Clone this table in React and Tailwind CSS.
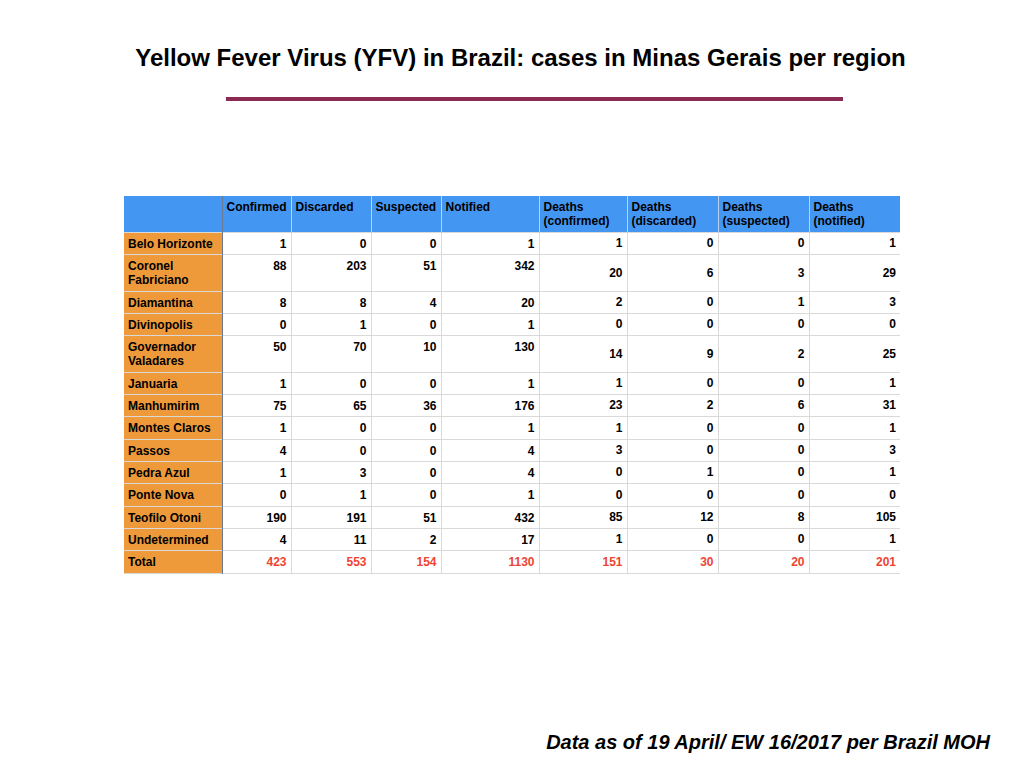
import React from "react";

const cols = [
  { label: ["Confirmed"], w: "w-[69px]", top: true },
  { label: ["Discarded"], w: "w-[80px]", top: true },
  { label: ["Suspected"], w: "w-[70px]", top: true },
  { label: ["Notified"], w: "w-[98px]", top: true },
  { label: ["Deaths", "(confirmed)"], w: "w-[88px]", top: false },
  { label: ["Deaths", "(discarded)"], w: "w-[91px]", top: false },
  { label: ["Deaths", "(suspected)"], w: "w-[91px]", top: false },
  { label: ["Deaths", "(notified)"], w: "w-[91px]", top: false },
];

const rows = [
  { name: ["Belo Horizonte"], h: "h-[22px]", v: [1, 0, 0, 1, 1, 0, 0, 1] },
  { name: ["Coronel", "Fabriciano"], h: "h-[37px]", v: [88, 203, 51, 342, 20, 6, 3, 29] },
  { name: ["Diamantina"], h: "h-[22px]", v: [8, 8, 4, 20, 2, 0, 1, 3] },
  { name: ["Divinopolis"], h: "h-[22px]", v: [0, 1, 0, 1, 0, 0, 0, 0] },
  { name: ["Governador", "Valadares"], h: "h-[37px]", v: [50, 70, 10, 130, 14, 9, 2, 25] },
  { name: ["Januaria"], h: "h-[22px]", v: [1, 0, 0, 1, 1, 0, 0, 1] },
  { name: ["Manhumirim"], h: "h-[22px]", v: [75, 65, 36, 176, 23, 2, 6, 31] },
  { name: ["Montes Claros"], h: "h-[23px]", v: [1, 0, 0, 1, 1, 0, 0, 1] },
  { name: ["Passos"], h: "h-[22px]", v: [4, 0, 0, 4, 3, 0, 0, 3] },
  { name: ["Pedra Azul"], h: "h-[22px]", v: [1, 3, 0, 4, 0, 1, 0, 1] },
  { name: ["Ponte Nova"], h: "h-[23px]", v: [0, 1, 0, 1, 0, 0, 0, 0] },
  { name: ["Teofilo Otoni"], h: "h-[22px]", v: [190, 191, 51, 432, 85, 12, 8, 105] },
  { name: ["Undetermined"], h: "h-[22px]", v: [4, 11, 2, 17, 1, 0, 0, 1] },
];

const total = [423, 553, 154, 1130, 151, 30, 20, 201];

const App = () => {
  return (
    <div
      className="w-[1024px] h-[768px] bg-white flex flex-col text-black"
      style={{ fontFamily: '"Liberation Sans", Arial, sans-serif' }}
    >
      {/* title */}
      <div className="h-[44px] mt-[36px] flex justify-center pl-[17px]">
        <h1 className="text-[24px] leading-[44px] font-bold">
          Yellow Fever Virus (YFV) in Brazil: cases in Minas Gerais per region
        </h1>
      </div>
      <div className="ml-[226px] mt-[17px] w-[617px] h-[4px] bg-[#8b2a52]" />

      {/* table */}
      <table className="ml-[124px] mt-[95px] w-[776px] table-fixed border-collapse text-[12px] font-bold leading-[14px]">
        <thead>
          <tr className="h-[36px] bg-[#4496f3]">
            <th className="w-[98px] border-r border-r-[#6b7a90] p-0" />
            {cols.map((c, i) => (
              <th
                key={i}
                className={`${c.w} align-top text-left font-bold px-[4px] pt-[4px] border-l border-[#b9d3f5] first:border-l-0`}
              >
                {c.label.map((l, j) => (
                  <div key={j}>{l}</div>
                ))}
              </th>
            ))}
          </tr>
        </thead>
        <tbody>
          {rows.map((r, i) => (
            <tr key={i} className={`${r.h} border-t border-[#d9d9d9]`}>
              <td className="bg-[#ef9a3a] align-top px-[4px] pt-[4px] border-r border-r-[#6b7a90]">
                {r.name.map((n, j) => (
                  <div key={j}>{n}</div>
                ))}
              </td>
              {r.v.map((v, j) => (
                <td
                  key={j}
                  className={`${cols[j].top ? "align-top pt-[4px]" : "align-middle"} text-right pr-[4px] border-l border-[#d9d9d9]`}
                >
                  {v}
                </td>
              ))}
            </tr>
          ))}
          <tr className="h-[23px] border-y border-[#d9d9d9]">
            <td className="bg-[#ef9a3a] align-middle px-[4px] border-r border-r-[#6b7a90]">
              Total
            </td>
            {total.map((v, j) => (
              <td
                key={j}
                className="align-middle text-right pr-[4px] text-[#ee4431] border-l border-[#d9d9d9]"
              >
                {v}
              </td>
            ))}
          </tr>
        </tbody>
      </table>

      {/* footer */}
      <div className="mt-auto mb-[14px] pr-[34px] flex justify-end">
        <p className="text-[20px] leading-[24px] font-bold italic">
          Data as of 19 April/ EW 16/2017 per Brazil MOH
        </p>
      </div>
    </div>
  );
};

export default App;
